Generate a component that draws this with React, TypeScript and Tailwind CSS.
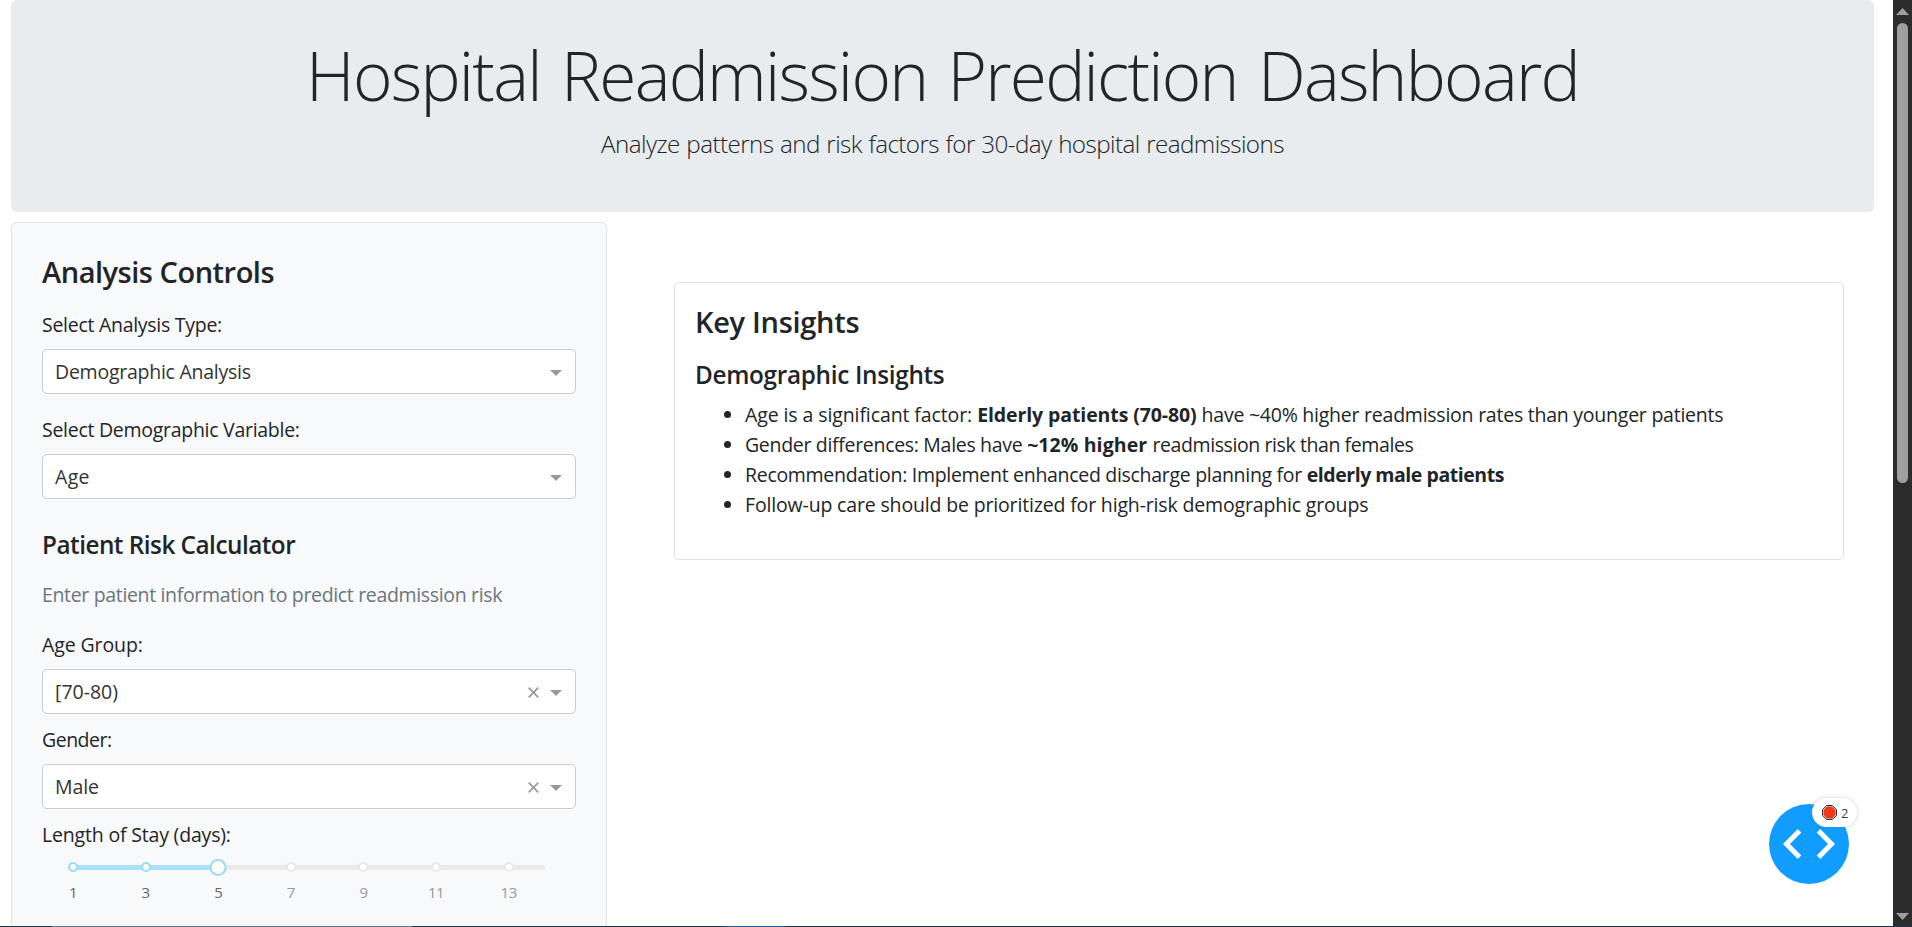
import type { ReactNode } from "react";

function Label({ children, className = "" }: { children: ReactNode; className?: string }) {
  return <label className={`block leading-[30px] ${className}`}>{children}</label>;
}

function Select({ value, clearable = false, className = "" }: { value: string; clearable?: boolean; className?: string }) {
  return (
    <div className="mt-[9px] flex h-[45px] items-center rounded-[5px] border border-[#ccc] bg-white pr-[13px] pl-3 text-[#333]">
      <span className={`flex-1 leading-[43px] ${className}`}>{value}</span>
      {clearable && (
        <svg className="mt-0.5 mr-[11px] h-[11px] w-[11px]" viewBox="0 0 11 11" fill="none" stroke="#999" strokeWidth="1.7">
          <path d="M0.7 0.7 10.3 10.3M10.3 0.7 0.7 10.3" />
        </svg>
      )}
      <svg className="mt-0.5 h-[6px] w-[12px]" viewBox="0 0 12 6" fill="#999">
        <path d="M0 0H12L6 6Z" />
      </svg>
    </div>
  );
}

const marks = [1, 3, 5, 7, 9, 11, 13];
const selectedDays = 5;

function StaySlider() {
  return (
    <div className="relative mt-[15px] ml-[31px] h-[60px] w-[472px]">
      <div className="h-[5px] rounded-full bg-[#e9e9e9]">
        <div className="h-[5px] w-[145px] rounded-full bg-[#abe2fb]" />
      </div>
      {marks.map((day) => {
        const left = ((day - 1) / 13) * 472;
        const active = day <= selectedDays;
        return (
          <div key={day}>
            <span
              className={`absolute -top-[3px] h-[10px] w-[10px] -translate-x-1/2 rounded-full border-2 bg-white ${active ? "border-[#96dbfa]" : "border-[#e9e9e9]"}`}
              style={{ left }}
            />
            <span
              className={`absolute top-4 -translate-x-1/2 text-[15px] leading-[22px] tracking-[-0.5px] ${active ? "text-[#666]" : "text-[#999]"}`}
              style={{ left }}
            >
              {day}
            </span>
          </div>
        );
      })}
      <span className="absolute -top-[6px] left-[145px] h-[17px] w-[17px] -translate-x-1/2 rounded-full border-2 border-[#96dbfa] bg-white" />
    </div>
  );
}

function Controls() {
  return (
    <section className="h-[760px] w-[596px] shrink-0 rounded-[5px] border border-[#dee2e6] bg-[#f8f9fa] px-[30px] pt-[31px]">
      <h3 className="text-[29px] leading-9 font-semibold tracking-[-0.48px]">Analysis Controls</h3>
      <Label className="mt-5 tracking-[-0.28px]">Select Analysis Type:</Label>
      <Select value="Demographic Analysis" className="tracking-[-0.25px]" />
      <Label className="mt-[21px] tracking-[-0.28px]">Select Demographic Variable:</Label>
      <Select value="Age" className="tracking-[0.3px]" />
      <h4 className="mt-[31px] text-[24.3px] leading-[30px] font-semibold tracking-[-0.5px]">Patient Risk Calculator</h4>
      <p className="mt-5 mb-5 leading-[30px] tracking-[-0.34px] text-[#6c757d]">Enter patient information to predict readmission risk</p>
      <Label className="tracking-[-0.1px]">Age Group:</Label>
      <Select value="[70-80)" clearable />
      <Label className="mt-[11px] tracking-[-0.5px]">Gender:</Label>
      <Select value="Male" clearable className="tracking-[-0.1px]" />
      <Label className="mt-[11px] tracking-[-0.18px]">Length of Stay (days):</Label>
      <StaySlider />
    </section>
  );
}

function Insights() {
  return (
    <section className="mt-[60px] mr-[30px] ml-[67px] h-[278px] flex-1 rounded-[5px] border border-[#dee2e6] bg-white px-5 pt-[21px]">
      <h3 className="text-[29px] leading-9 font-semibold tracking-[-0.3px]">Key Insights</h3>
      <h4 className="mt-5 text-[24.3px] leading-[30px] font-semibold tracking-[-0.3px]">Demographic Insights</h4>
      <ul className="mt-2.5 list-disc pl-[50px] leading-[30px] whitespace-nowrap">
        <li>
          <span className="tracking-[-0.1px]">Age is a significant factor: </span>
          <b className="tracking-[-0.1px]">Elderly patients (70-80) </b>
          <span className="tracking-[-0.24px]">have ~40% higher readmission rates than younger patients</span>
        </li>
        <li>
          <span className="tracking-[-0.31px]">Gender differences: Males have </span>
          <b className="tracking-[0.1px]">~12% higher </b>
          <span className="tracking-[-0.41px]">readmission risk than females</span>
        </li>
        <li>
          <span className="tracking-[-0.3px]">Recommendation: Implement enhanced discharge planning for </span>
          <b className="tracking-[-0.46px]">elderly male patients</b>
        </li>
        <li className="tracking-[-0.16px]">Follow-up care should be prioritized for high-risk demographic groups</li>
      </ul>
    </section>
  );
}

function DebugButton() {
  return (
    <div className="absolute top-[804px] left-[1769px] flex h-20 w-20 items-center justify-center rounded-full bg-[#119dff]">
      <svg className="h-[30px] w-[52px]" viewBox="0 0 52 30" fill="none" stroke="#fff" strokeWidth="5">
        <path d="M16.5 1.8 3.5 15 16.5 28.2M35.5 1.8 48.5 15 35.5 28.2" />
      </svg>
      <div className="absolute -top-[6px] left-[43px] flex h-[29px] w-[45px] items-center rounded-full bg-white pl-[10px] shadow-[0_0_4px_rgba(80,103,132,0.3)]">
        <svg className="h-[15px] w-[15px]" viewBox="0 0 15 15">
          <path d="M4.6 .5H10.4L14.5 4.6V10.4L10.4 14.5H4.6L.5 10.4V4.6Z" fill="#d8d8d8" stroke="#333" />
          <path d="M5 1.6H10L13.4 5V10L10 13.4H5L1.6 10V5Z" fill="#f03a17" />
        </svg>
        <span className="ml-1 text-[13px] leading-4 text-[#444]">2</span>
      </div>
    </div>
  );
}

function Scrollbar() {
  return (
    <div className="flex w-[19px] shrink-0 flex-col items-center bg-[#2c2c2c]">
      <svg className="mt-2 h-[7px] w-[13px] shrink-0" viewBox="0 0 13 7" fill="#9f9f9f">
        <path d="M6.5 0 13 7H0Z" />
      </svg>
      <div className="mt-2 h-[460px] w-[11px] shrink-0 rounded-full bg-[#9f9f9f]" />
      <svg className="mt-auto mb-[6px] h-[7px] w-[13px] shrink-0" viewBox="0 0 13 7" fill="#9f9f9f">
        <path d="M0 0H13L6.5 7Z" />
      </svg>
    </div>
  );
}

export default function App() {
  return (
    <div className="relative flex h-[927px] w-[1912px] flex-col overflow-hidden bg-white font-['Open_Sans','Noto_Sans',sans-serif] text-[19.5px] text-[#212529]">
      <div className="flex h-[926px] shrink-0">
        <main className="flex h-[926px] flex-1 flex-col overflow-hidden pr-[19px] pl-[11px]">
          <header className="h-[212px] shrink-0 rounded-[6px] bg-[#e8ecef] pt-[33px] text-center">
            <h1 className="text-[67.5px] leading-[84px] font-light tracking-[-1.75px] [word-spacing:4.5px]">Hospital Readmission Prediction Dashboard</h1>
            <p className="mt-2 text-[24.2px] leading-[37.5px] font-light tracking-[-0.56px] [word-spacing:0.8px]">Analyze patterns and risk factors for 30-day hospital readmissions</p>
          </header>
          <div className="mt-2.5 flex items-start">
            <Controls />
            <Insights />
          </div>
        </main>
        <Scrollbar />
      </div>
      <div className="flex h-px shrink-0 bg-[#1d364d]">
        <div className="ml-[52px] h-px w-[360px] bg-[#5c768b]" />
        <div className="ml-[312px] h-px w-[61px] bg-[#175a92]" />
      </div>
      <DebugButton />
    </div>
  );
}
